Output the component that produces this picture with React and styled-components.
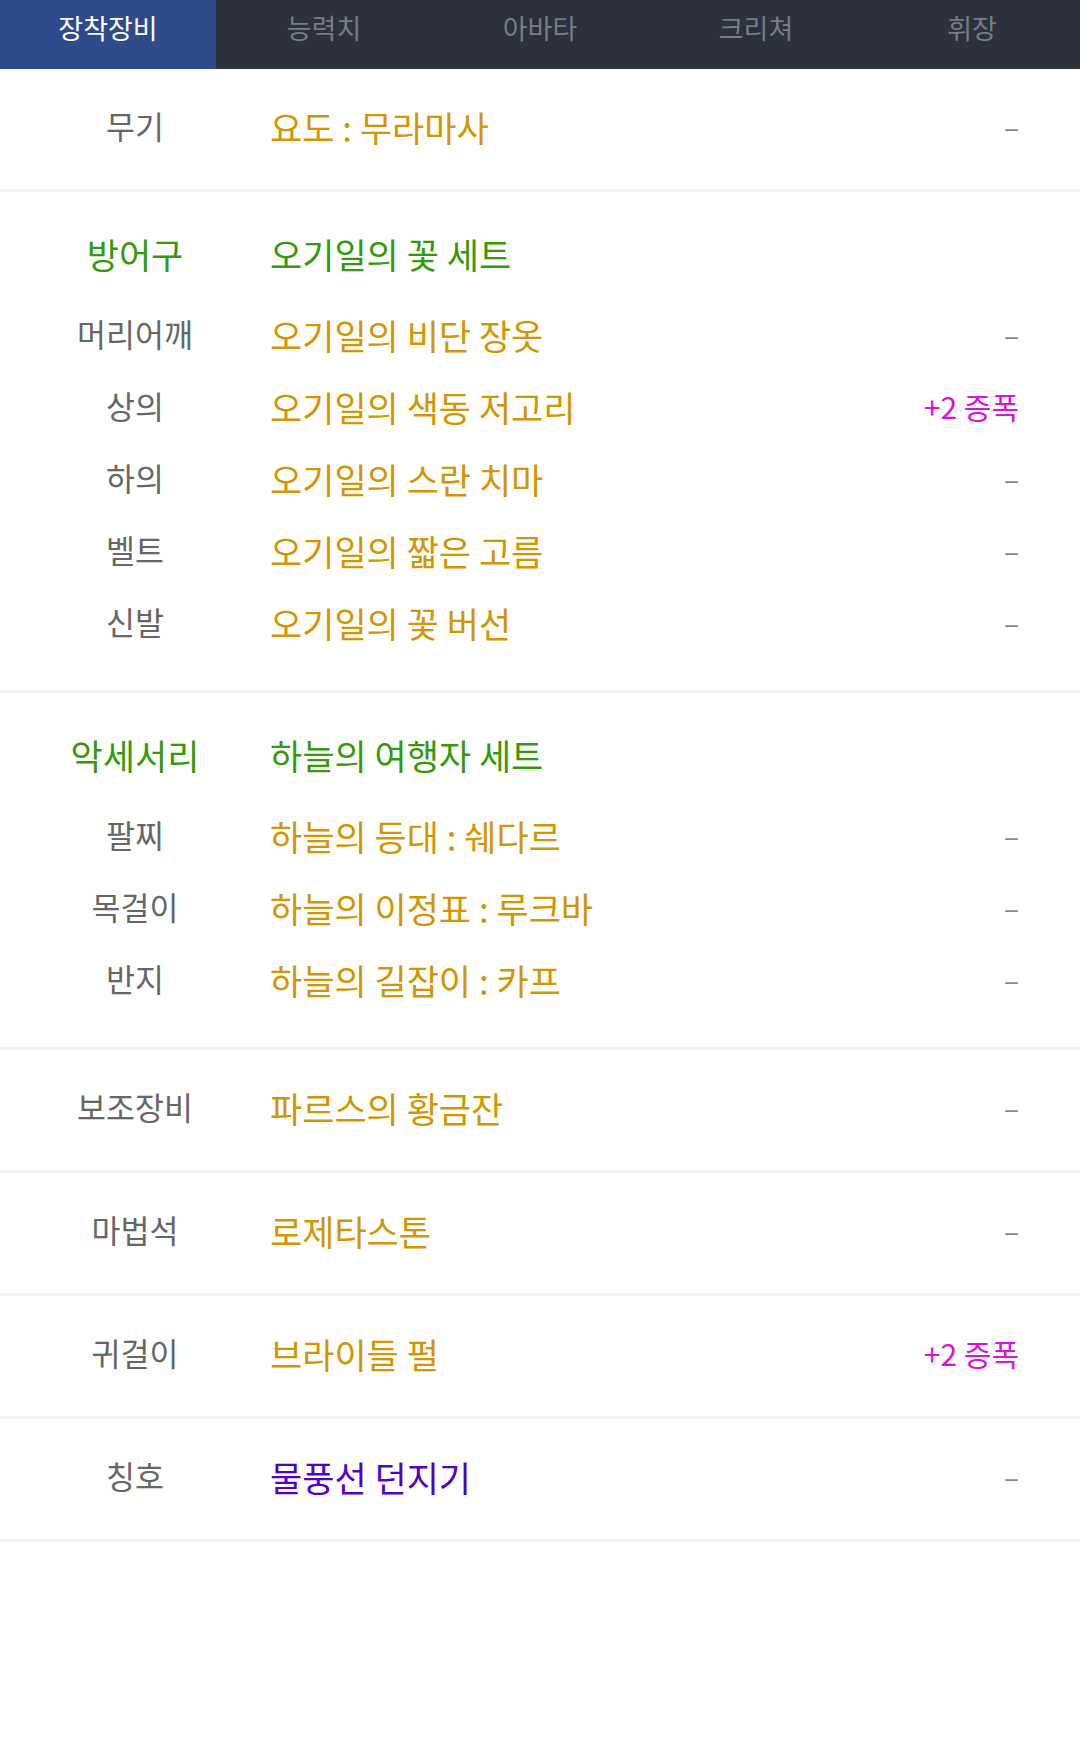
import React from "react";
import styled, { createGlobalStyle } from "styled-components";

const Global = createGlobalStyle`
  html, body { margin: 0; padding: 0; background: #fff; }
  body { font-family: "Noto Sans CJK KR", "Noto Sans", sans-serif; }
  * { box-sizing: border-box; }
`;

const Page = styled.div`
  width: 1080px;
  min-height: 1755px;
  background: #fff;
`;

const TabBar = styled.nav`
  display: grid;
  grid-template-columns: repeat(5, 1fr);
  height: 69px;
  background: #2c313c;
`;

const Tab = styled.div`
  display: flex;
  justify-content: center;
  align-items: flex-start;
  padding-top: 8px;
  font-size: 27px;
  line-height: 40px;
  color: ${(p) => (p.$active ? "#ffffff" : "#787c84")};
  background: ${(p) => (p.$active ? "#2d4a8b" : "transparent")};
`;

const Section = styled.section`
  display: flex;
  flex-direction: column;
  padding: ${(p) => (p.$group ? "25px 0 32px" : "0")};
  border-bottom: 3px solid #f1f1f1;
`;

const Row = styled.div`
  display: grid;
  grid-template-columns: 270px 1fr auto;
  align-items: center;
  height: ${(p) => (p.$single ? "120px" : "72px")};
  padding-right: 61px;
  padding-bottom: ${(p) => (p.$single ? "6px" : "0")};
  margin-bottom: ${(p) => (p.$header ? "9px" : "0")};
`;

const Label = styled.div`
  text-align: center;
  font-size: ${(p) => (p.$set ? "35px" : "31.5px")};
  color: ${(p) => (p.$set ? "#349a08" : "#666666")};
  line-height: 1;
`;

const Item = styled.div`
  font-size: 35px;
  line-height: 1;
  color: ${(p) => p.$color};
  white-space: nowrap;
`;

const Extra = styled.div`
  font-size: ${(p) => (p.$amp ? "30px" : "28px")};
  line-height: 1;
  color: ${(p) => (p.$amp ? "#dd11dd" : "#8a8a8a")};
  text-align: right;
`;

const GOLD = "#d49500";
const GREEN = "#349a08";
const PURPLE = "#5300c8";

const tabs = ["장착장비", "능력치", "아바타", "크리쳐", "휘장"];

const SingleRow = ({ label, item, color = GOLD, amp }) => (
  <Section>
    <Row $single>
      <Label>{label}</Label>
      <Item $color={color}>{item}</Item>
      <Extra $amp={!!amp}>{amp || "–"}</Extra>
    </Row>
  </Section>
);

const Group = ({ title, setName, rows }) => (
  <Section $group>
    <Row $header>
      <Label $set>{title}</Label>
      <Item $color={GREEN}>{setName}</Item>
      <Extra />
    </Row>
    {rows.map((r) => (
      <Row key={r.label}>
        <Label>{r.label}</Label>
        <Item $color={GOLD}>{r.item}</Item>
        <Extra $amp={!!r.amp}>{r.amp || "–"}</Extra>
      </Row>
    ))}
  </Section>
);

export default function App() {
  return (
    <Page>
      <Global />
      <TabBar>
        {tabs.map((t, i) => (
          <Tab key={t} $active={i === 0}>
            {t}
          </Tab>
        ))}
      </TabBar>
      <SingleRow label="무기" item="요도 : 무라마사" />
      <Group
        title="방어구"
        setName="오기일의 꽃 세트"
        rows={[
          { label: "머리어깨", item: "오기일의 비단 장옷" },
          { label: "상의", item: "오기일의 색동 저고리", amp: "+2 증폭" },
          { label: "하의", item: "오기일의 스란 치마" },
          { label: "벨트", item: "오기일의 짧은 고름" },
          { label: "신발", item: "오기일의 꽃 버선" },
        ]}
      />
      <Group
        title="악세서리"
        setName="하늘의 여행자 세트"
        rows={[
          { label: "팔찌", item: "하늘의 등대 : 쉐다르" },
          { label: "목걸이", item: "하늘의 이정표 : 루크바" },
          { label: "반지", item: "하늘의 길잡이 : 카프" },
        ]}
      />
      <SingleRow label="보조장비" item="파르스의 황금잔" />
      <SingleRow label="마법석" item="로제타스톤" />
      <SingleRow label="귀걸이" item="브라이들 펄" amp="+2 증폭" />
      <SingleRow label="칭호" item="물풍선 던지기" color={PURPLE} />
    </Page>
  );
}
